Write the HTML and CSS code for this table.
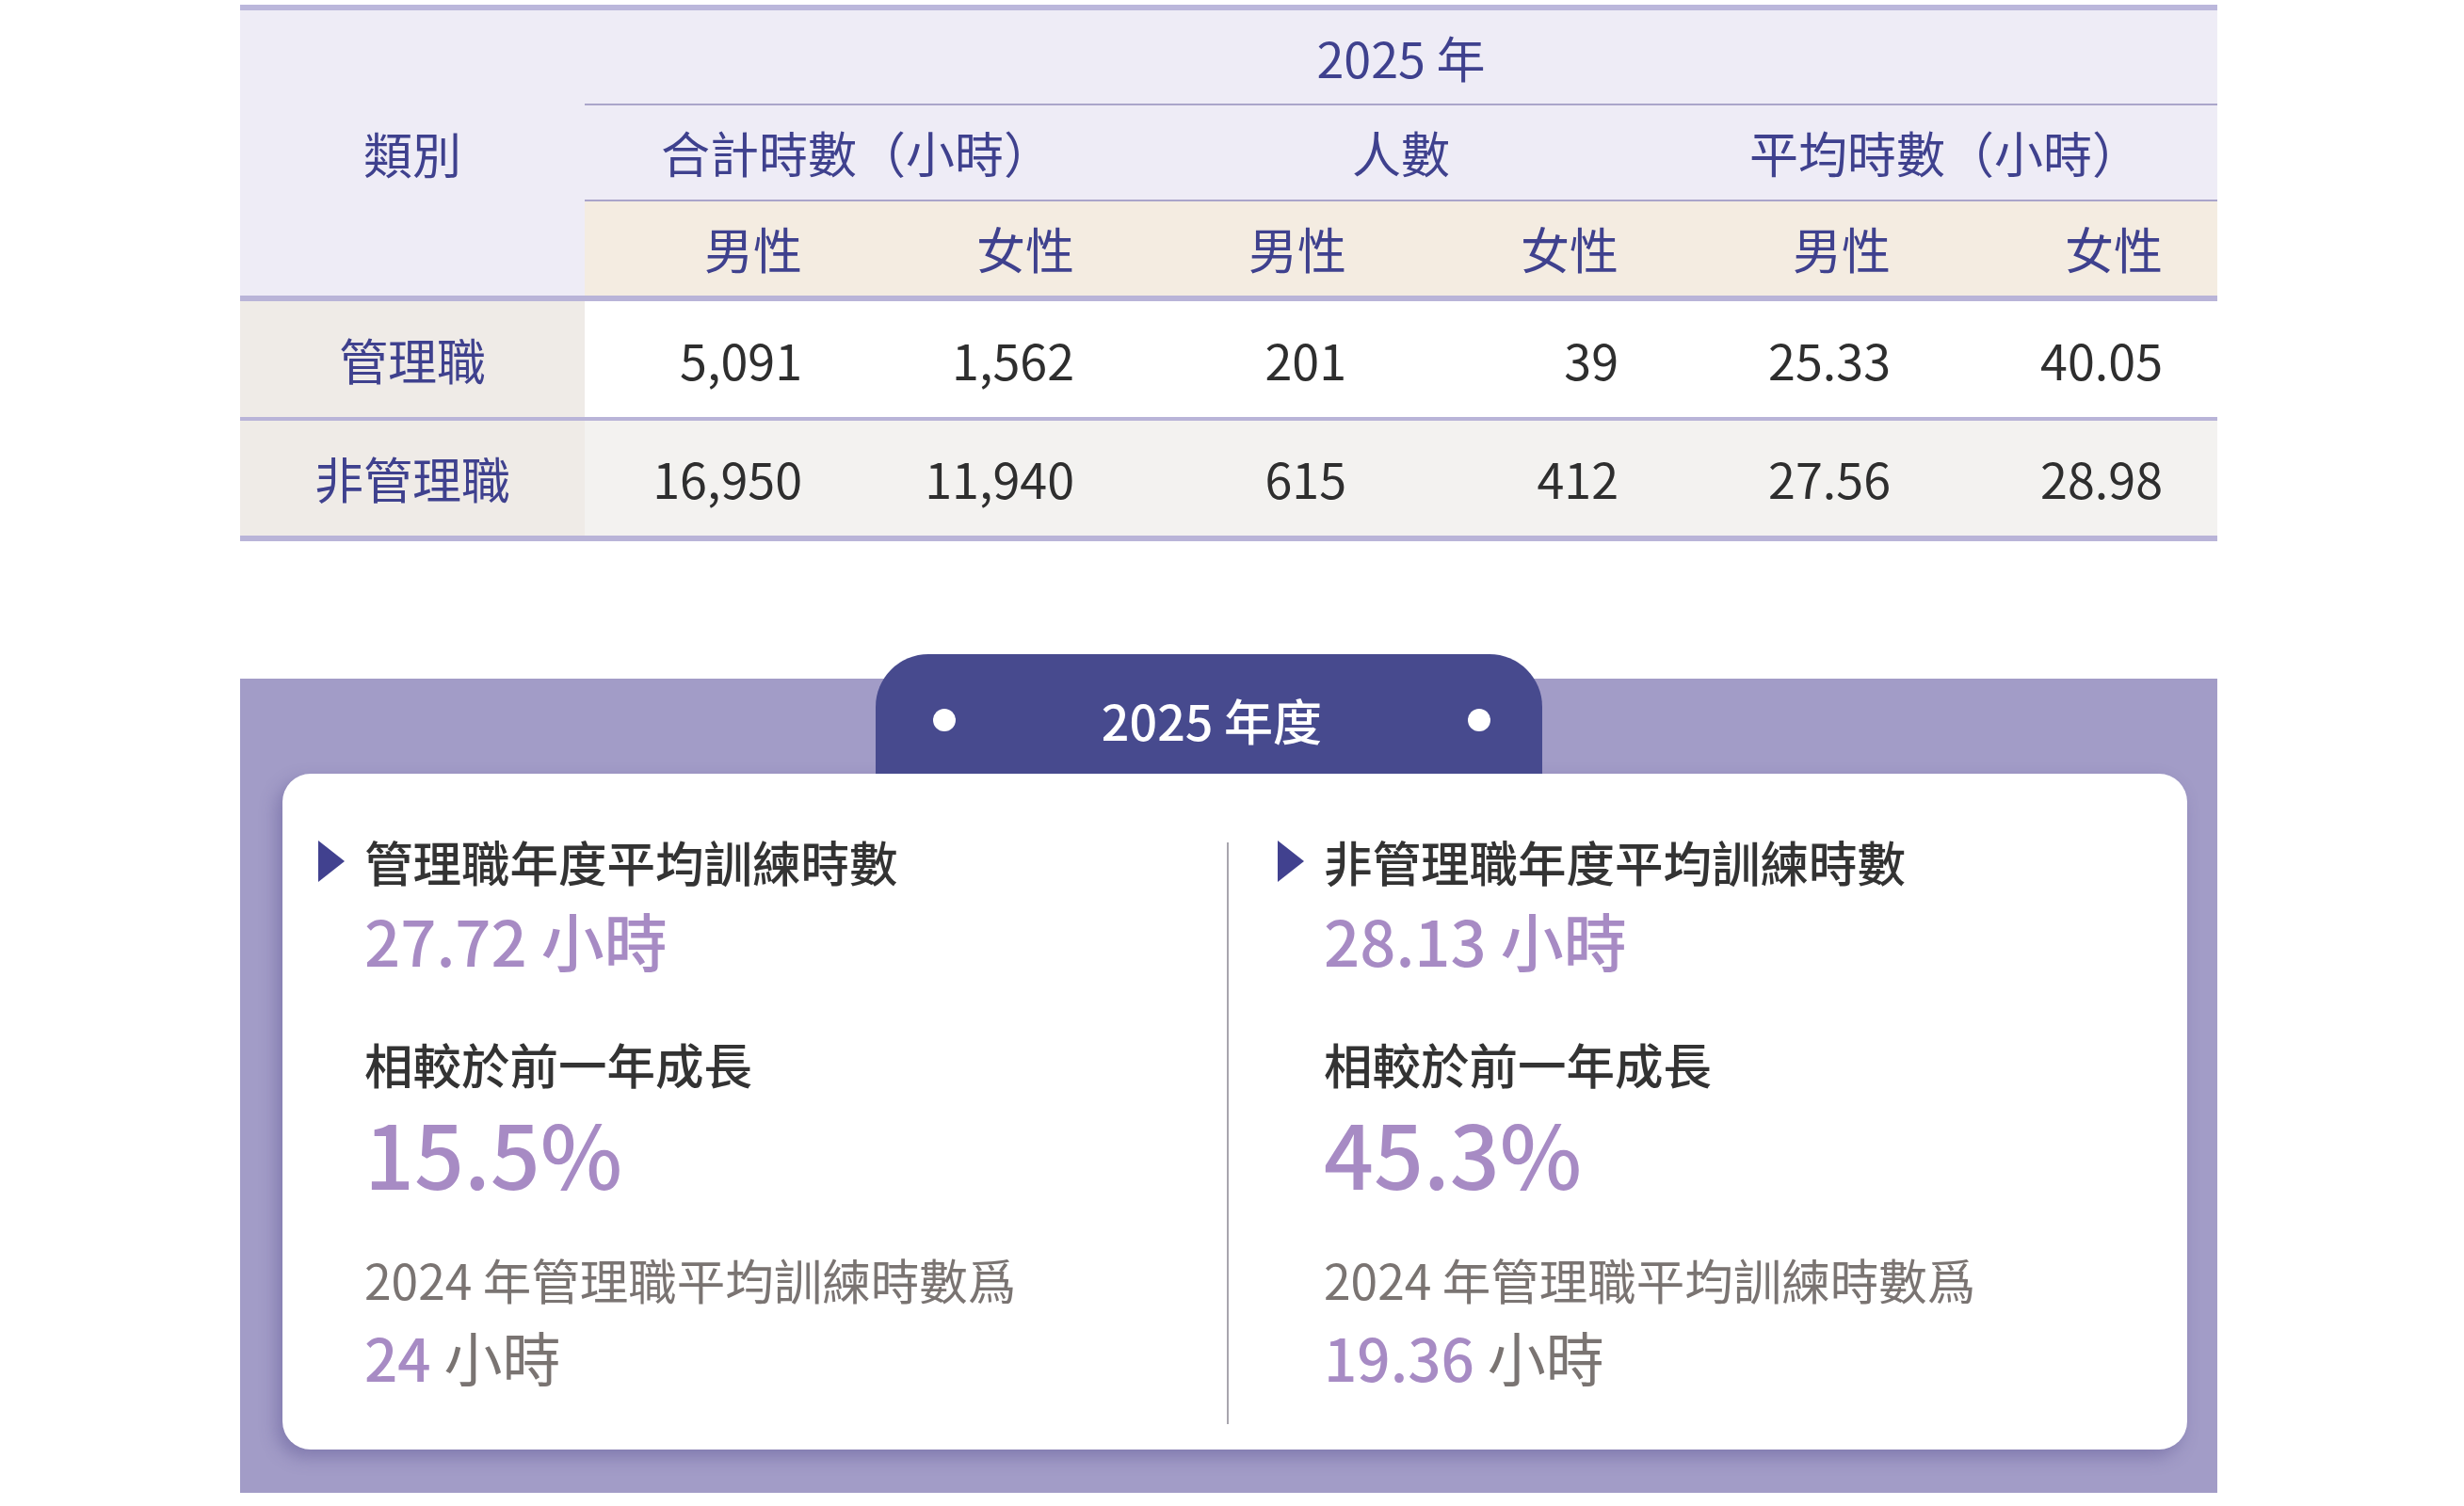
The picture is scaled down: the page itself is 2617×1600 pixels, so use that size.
FILE: index.html
```html
<!DOCTYPE html>
<html lang="zh-Hant">
<head>
<meta charset="utf-8">
<title>2025 年度訓練時數</title>
<link rel="stylesheet" href="styles.css">
</head>
<body>
<main class="page">
  <div class="stats-table">
    <div class="cell head cat-head">類別</div>
    <div class="cell head year">2025 年</div>
    <div class="cell head group">合計時數（小時）</div>
    <div class="cell head group">人數</div>
    <div class="cell head group">平均時數（小時）</div>
    <div class="cell gender">男性</div>
    <div class="cell gender">女性</div>
    <div class="cell gender">男性</div>
    <div class="cell gender">女性</div>
    <div class="cell gender">男性</div>
    <div class="cell gender">女性</div>

    <div class="cell label">管理職</div>
    <div class="cell num">5,091</div>
    <div class="cell num">1,562</div>
    <div class="cell num">201</div>
    <div class="cell num">39</div>
    <div class="cell num">25.33</div>
    <div class="cell num">40.05</div>

    <div class="cell label last">非管理職</div>
    <div class="cell num alt last">16,950</div>
    <div class="cell num alt last">11,940</div>
    <div class="cell num alt last">615</div>
    <div class="cell num alt last">412</div>
    <div class="cell num alt last">27.56</div>
    <div class="cell num alt last">28.98</div>
  </div>

  <section class="summary">
    <div class="tab">
      <span class="dot"></span>
      <span class="tab-title">2025 年度</span>
      <span class="dot"></span>
    </div>
    <div class="card">
      <div class="col col-left">
        <h3 class="col-title"><span class="arrow"></span>管理職年度平均訓練時數</h3>
        <p class="value">27.72 小時</p>
        <p class="subtitle">相較於前一年成長</p>
        <p class="percent">15.5%</p>
        <p class="note">2024 年管理職平均訓練時數爲</p>
        <p class="prev"><span class="hl">24</span> 小時</p>
      </div>
      <div class="divider"></div>
      <div class="col col-right">
        <h3 class="col-title"><span class="arrow"></span>非管理職年度平均訓練時數</h3>
        <p class="value">28.13 小時</p>
        <p class="subtitle">相較於前一年成長</p>
        <p class="percent">45.3%</p>
        <p class="note">2024 年管理職平均訓練時數爲</p>
        <p class="prev"><span class="hl">19.36</span> 小時</p>
      </div>
    </div>
  </section>
</main>
</body>
</html>
```

FILE: styles.css
```css
* {
  box-sizing: border-box;
}

html, body {
  margin: 0;
  padding: 0;
  background: #ffffff;
}

body {
  width: 2617px;
  height: 1600px;
  overflow: hidden;
  font-family: "Noto Sans CJK TC", "Noto Sans", sans-serif;
}

.page {
  padding: 5px 0 0 255px;
}

/* ---------- table ---------- */
.stats-table {
  width: 2100px;
  display: grid;
  grid-template-columns: 366px repeat(6, 289px);
  grid-template-rows: 101px 102px 106px 127px 128px;
  border-top: 6px solid #bbb7db;
}

.cell {
  display: flex;
  align-items: center;
  font-size: 52px;
  line-height: 1;
}

.head {
  background: #eeecf6;
  color: #3f418e;
  justify-content: center;
}

.cat-head {
  grid-row: 1 / 4;
  border-bottom: 6px solid #b9b4d8;
}

.year {
  grid-column: 2 / 8;
  border-bottom: 2px solid #aaa5ca;
}

.group {
  grid-column: span 2;
  border-bottom: 2px solid #aaa5ca;
}

.gender {
  background: #f4ece1;
  color: #3f418e;
  justify-content: flex-end;
  padding-right: 58px;
  border-bottom: 6px solid #b9b4d8;
}

.label {
  background: #efebe7;
  color: #3f418e;
  justify-content: center;
  border-bottom: 4px solid #b9b4d8;
}

.num {
  background: #ffffff;
  color: #2e2e2e;
  justify-content: flex-end;
  padding-right: 58px;
  border-bottom: 4px solid #b9b4d8;
}

.num.alt {
  background: #f3f2f0;
}

.last {
  border-bottom-width: 6px;
}

/* ---------- summary ---------- */
.summary {
  width: 2100px;
  margin-top: 146px;
  padding: 0 32px 46px 45px;
  background: #a29cc7;
  display: flex;
  flex-direction: column;
}

.tab {
  position: relative;
  align-self: flex-start;
  width: 708px;
  height: 127px;
  margin: -26px 0 0 630px;
  padding: 12px 55px 0 61px;
  background: #474a8e;
  border-radius: 56px 56px 0 0;
  display: flex;
  align-items: center;
  justify-content: space-between;
}

.dot {
  width: 24px;
  height: 24px;
  border-radius: 50%;
  background: #ffffff;
}

.tab-title {
  color: #ffffff;
  font-size: 52px;
  font-weight: 500;
  line-height: 1;
}

.card {
  height: 718px;
  background: #ffffff;
  border-radius: 30px;
  box-shadow: -6px 8px 18px rgba(70, 60, 130, 0.35);
  display: grid;
  grid-template-columns: 1003px 2px 1fr;
}

.divider {
  margin: 73px 0 27px;
  background: #a8a6ae;
}

.col {
  padding-top: 67px;
}

.col-left {
  padding-left: 38px;
}

.col-right {
  padding-left: 52px;
}

.col-title {
  margin: 0;
  line-height: 1;
  display: flex;
  align-items: center;
  gap: 21px;
  font-size: 51.5px;
  font-weight: 500;
  color: #333333;
}

.arrow {
  width: 0;
  height: 0;
  border-top: 22px solid transparent;
  border-bottom: 22px solid transparent;
  border-left: 28px solid #41418f;
}

.value,
.subtitle,
.percent,
.note,
.prev {
  margin: 0;
  line-height: 1;
  padding-left: 49px;
}

.value {
  margin-top: 23px;
  font-size: 67px;
  font-weight: 500;
  color: #a78bc4;
}

.subtitle {
  margin-top: 73px;
  font-size: 51.5px;
  font-weight: 500;
  color: #333333;
}

.percent {
  margin-top: 22px;
  font-size: 93px;
  font-weight: 500;
  color: #a78bc4;
}

.note {
  margin-top: 63px;
  font-size: 51.5px;
  color: #7a7472;
}

.prev {
  margin-top: 25px;
  font-size: 62px;
  color: #7a7472;
}

.hl {
  color: #a78bc4;
  font-weight: 500;
}
```
